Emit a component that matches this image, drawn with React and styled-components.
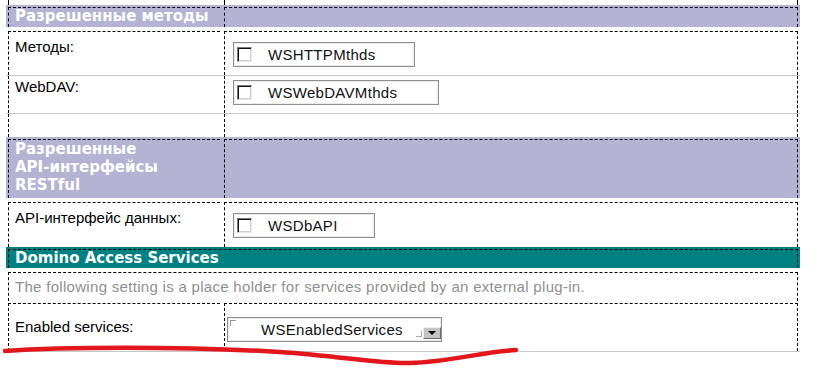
import styled, { createGlobalStyle } from 'styled-components'

const GlobalStyle = createGlobalStyle`
    html, body {
        margin: 0;
        padding: 0;
        background: #fff;
    }
    body {
        width: 823px;
        height: 370px;
        overflow: hidden;
        font-family: "Liberation Sans", Arial, sans-serif;
    }
`

const Page = styled.div`
    position: relative;
    width: 823px;
    height: 370px;
`

const Table = styled.div`
    margin-left: 6px;
    width: 794px;
    display: flex;
    flex-direction: column;
`

const Row = styled.div`
    display: grid;
    grid-template-columns: ${p => p.$span ? '1fr' : '216px 1fr'};
    height: ${p => p.$h}px;
    box-sizing: border-box;
    background: ${p => p.$bg || 'transparent'};
    border-bottom: ${p => p.$sep ? '1px solid #c8c8c8' : 'none'};
`

const Cell = styled.div`
    display: flex;
    min-height: 0;
    padding: ${p => p.$pt ?? 2}px 2px 0 2px;
`

const Frame = styled.div`
    flex: 1;
    display: flex;
    flex-direction: column;
    align-items: flex-start;
    border-left: 1px dashed #000;
    border-top: ${p => p.$top ? '1px dashed #000' : 'none'};
    border-right: ${p => p.$end ? '1px dashed #000' : 'none'};
    padding-left: ${p => p.$pl ?? 6}px;
`

const HeadText = styled.div`
    font-family: "DejaVu Sans", Verdana, sans-serif;
    font-weight: bold;
    font-size: 15px;
    line-height: ${p => p.$lh ?? 16}px;
    color: #fff;
`

const Label = styled.div`
    font-size: 15px;
    line-height: 16px;
    color: #000;
    padding-top: ${p => p.$pt}px;
`

const Note = styled.div`
    font-size: 15px;
    line-height: 16px;
    letter-spacing: 0.3px;
    color: #8f8f8f;
    padding-top: 6px;
    white-space: nowrap;
`

const Field = styled.div`
    margin: ${p => p.$mt}px 0 0 ${p => p.$ml ?? 8}px;
    width: ${p => p.$w}px;
    height: 25px;
    box-sizing: border-box;
    border: 1px solid #8e8e8e;
    box-shadow: inset 0 0 0 1px #ececec;
    background: #fff;
    display: flex;
    align-items: center;
    padding-left: 3px;
`

const Check = styled.span`
    width: 15px;
    height: 15px;
    box-sizing: border-box;
    flex-shrink: 0;
    background: #fff;
    border: 1px solid;
    border-color: #7a7a7a #e6e6e6 #e6e6e6 #7a7a7a;
    box-shadow: inset 1px 1px 0 #111, inset -1px -1px 0 #cfcfcf;
`

const FieldText = styled.span`
    margin-left: ${p => p.$ml ?? 16}px;
    font-size: 15px;
    letter-spacing: 0.3px;
    color: #111;
    white-space: nowrap;
`

const Select = styled(Field)`
    position: relative;
    padding: 0 0 0 33px;

    &::before {
        content: '';
        position: absolute;
        top: 2px;
        left: 2px;
        width: 5px;
        height: 5px;
        border-top: 1px solid #999;
        border-left: 1px solid #999;
    }
`

const Grow = styled.span`
    flex: 1;
`

const Corner = styled.span`
    align-self: flex-end;
    width: 5px;
    height: 5px;
    margin: 0 1px 4px 0;
    border-right: 1px solid #a8a8a8;
    border-bottom: 1px solid #a8a8a8;
`

const DropBtn = styled.span`
    align-self: flex-end;
    margin-bottom: 2px;
    width: 18px;
    height: 12px;
    box-sizing: border-box;
    background: #c4c4c4;
    border: 1px solid;
    border-color: #f0f0f0 #6e6e6e #6e6e6e #f0f0f0;
    display: flex;
    align-items: center;
    justify-content: center;

    &::after {
        content: '';
        width: 0;
        height: 0;
        border-left: 4px solid transparent;
        border-right: 4px solid transparent;
        border-top: 4px solid #000;
    }
`

const Scribble = styled.svg`
    position: absolute;
    left: 0;
    top: 0;
    pointer-events: none;
`

const LAVENDER = '#b3b3d4'
const TEAL = '#008080'

function CheckField({ w, mt, children }) {
    return (
        <Field $w={w} $mt={mt}>
            <Check />
            <FieldText>{children}</FieldText>
        </Field>
    )
}

export default function App() {
    return (
        <Page>
            <GlobalStyle />
            <Table>
                <Row $h={5}>
                    <Cell $pt={0}><Frame /></Cell>
                    <Cell $pt={0}><Frame $end /></Cell>
                </Row>

                <Row $h={22} $bg={LAVENDER}>
                    <Cell><Frame $top><HeadText>Разрешенные методы</HeadText></Frame></Cell>
                    <Cell><Frame $top $end /></Cell>
                </Row>

                <Row $h={49} $sep>
                    <Cell $pt={4}><Frame $top><Label $pt={7}>Методы:</Label></Frame></Cell>
                    <Cell $pt={4}>
                        <Frame $top $end $pl={0}>
                            <CheckField w={182} mt={10}>WSHTTPMthds</CheckField>
                        </Frame>
                    </Cell>
                </Row>

                <Row $h={38} $sep>
                    <Cell $pt={0}><Frame><Label $pt={3}>WebDAV:</Label></Frame></Cell>
                    <Cell $pt={0}>
                        <Frame $end $pl={0}>
                            <CheckField w={206} mt={4}>WSWebDAVMthds</CheckField>
                        </Frame>
                    </Cell>
                </Row>

                <Row $h={23}>
                    <Cell $pt={0}><Frame /></Cell>
                    <Cell $pt={0}><Frame $end /></Cell>
                </Row>

                <Row $h={61} $bg={LAVENDER}>
                    <Cell>
                        <Frame $top>
                            <HeadText $lh={18}>Разрешенные<br />API-интерфейсы<br />RESTful</HeadText>
                        </Frame>
                    </Cell>
                    <Cell><Frame $top $end /></Cell>
                </Row>

                <Row $h={49}>
                    <Cell $pt={4}><Frame $top><Label $pt={7}>API-интерфейс данных:</Label></Frame></Cell>
                    <Cell $pt={4}>
                        <Frame $top $end $pl={0}>
                            <CheckField w={142} mt={10}>WSDbAPI</CheckField>
                        </Frame>
                    </Cell>
                </Row>

                <Row $h={21} $bg={TEAL} $span>
                    <Cell><Frame $top $end><HeadText>Domino Access Services</HeadText></Frame></Cell>
                </Row>

                <Row $h={33} $span>
                    <Cell $pt={4}>
                        <Frame $top $end>
                            <Note>The following setting is a place holder for services provided by an external plug-in.</Note>
                        </Frame>
                    </Cell>
                </Row>

                <Row $h={51} $sep>
                    <Cell><Frame $top><Label $pt={15}>Enabled services:</Label></Frame></Cell>
                    <Cell>
                        <Frame $top $end $pl={0}>
                            <Select $w={215} $mt={13} $ml={2}>
                                <FieldText $ml={0}>WSEnabledServices</FieldText>
                                <Grow />
                                <Corner />
                                <DropBtn />
                            </Select>
                        </Frame>
                    </Cell>
                </Row>
            </Table>

            <Scribble width="823" height="370" viewBox="0 0 823 370">
                <path
                    d="M5 351 C 60 347, 180 346, 280 352 C 340 356, 380 364, 410 363 C 450 362, 480 352, 516 350"
                    fill="none"
                    stroke="#e3161c"
                    strokeWidth="4.5"
                    strokeLinecap="round"
                />
            </Scribble>
        </Page>
    )
}
